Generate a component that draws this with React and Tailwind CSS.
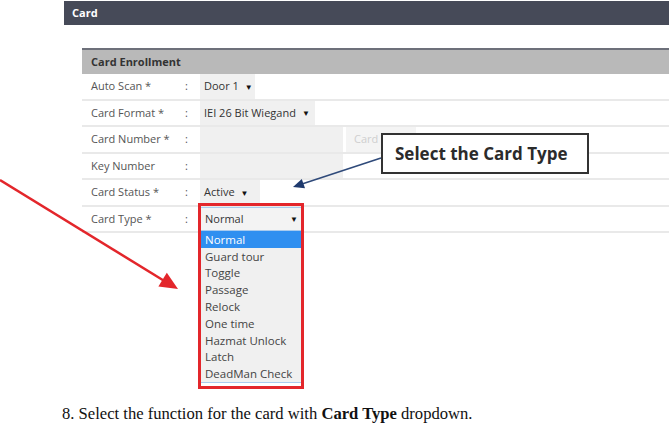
import React from "react";

const rows = [
  { label: "Auto Scan *", h: "h-[27px]", value: { text: "Door 1", w: "w-[55px]" } },
  { label: "Card Format *", h: "h-[26px]", value: { text: "IEI 26 Bit Wiegand", w: "w-[115px]" } },
  { label: "Card Number *", h: "h-[27px]", kind: "number" },
  { label: "Key Number", h: "h-[26px]", kind: "key" },
  { label: "Card Status *", h: "h-[27px]", value: { text: "Active", w: "w-[60px]" } },
  { label: "Card Type *", h: "h-[26px]", kind: "type" },
];

const cardTypes = [
  "Normal",
  "Guard tour",
  "Toggle",
  "Passage",
  "Relock",
  "One time",
  "Hazmat Unlock",
  "Latch",
  "DeadMan Check",
];

const Caret = () => <span className="shrink-0 text-[8px] leading-none text-[#111]">▼</span>;

const SelectBox = ({ text, w }) => (
  <div className={`flex h-full items-center gap-[6px] whitespace-nowrap bg-[#f0f0f0] pl-[4px] ${w}`}>
    <span>{text}</span>
    <Caret />
  </div>
);

const ValueCell = ({ row }) => {
  if (row.value) return <SelectBox {...row.value} />;
  if (row.kind === "number") {
    return (
      <div className="flex h-full gap-[3px]">
        <div className="h-full w-[143px] bg-[#f0f0f0]" />
        <div className="flex h-full w-[70px] items-center bg-[#f4f4f4] pl-[8px] text-[#cfcfcf]">Card</div>
      </div>
    );
  }
  if (row.kind === "key") return <div className="h-full w-[143px] bg-[#f0f0f0]" />;
  return (
    <div className="flex h-full w-[102px] items-center justify-between border border-[#a9cbee] bg-[#f3f3f3] pl-[4px] pr-[3px]">
      <span>Normal</span>
      <Caret />
    </div>
  );
};

export default function App() {
  return (
    <div className="relative h-[435px] w-[669px] overflow-hidden bg-white font-['Open_Sans',sans-serif]">
      {/* page title bar */}
      <div className="ml-[64px] mt-px flex h-6 items-center bg-[#464a58] pl-2 text-[11px] font-bold text-white">
        Card
      </div>

      {/* enrollment form */}
      <div className="ml-[82px] mt-[23px] text-[11px]">
        <div className="flex h-[26px] items-center border-t-2 border-[#6d707a] bg-[#b9b9b9] pl-[9px] font-bold text-[#333]">
          Card Enrollment
        </div>
        {rows.map((row) => (
          <div key={row.label} className={`flex ${row.h} border-b-2 border-[#e9e9e9]`}>
            <div className="flex w-[103px] items-center pl-[9px] text-[#555]">{row.label}</div>
            <div className="flex w-[15px] items-center text-[#555]">:</div>
            <div className="h-full text-[#333]">
              <ValueCell row={row} />
            </div>
          </div>
        ))}
      </div>

      <p className="ml-[62px] mt-[170px] font-['Liberation_Serif',serif] text-[16.6px] leading-[22px] text-[#111]">
        8. Select the function for the card with <b>Card Type</b> dropdown.
      </p>

      {/* open card type list */}
      <div className="absolute left-[200px] top-[231px] w-[102px] border border-t-0 border-[#a9cbee] bg-[#f0f0f0] text-[11.5px] text-[#444]">
        {cardTypes.map((t, i) => (
          <div
            key={t}
            className={`flex h-[16.8px] items-center pl-[4px] ${i === 0 ? "bg-[#2f8ff0] text-white" : ""}`}
          >
            {t}
          </div>
        ))}
      </div>

      {/* highlight frame */}
      <div className="absolute left-[198px] top-[203px] h-[186px] w-[106px] border-[3px] border-[#e3262b]" />

      {/* callout */}
      <div className="absolute left-[381px] top-[133px] flex h-[41px] w-[208px] items-center border-2 border-[#333] bg-white pl-[12px] text-[17px] font-bold text-[#2b2b2b]">
        Select the Card Type
      </div>

      <svg className="absolute left-0 top-0" width="669" height="435">
        <line x1="381" y1="158" x2="302" y2="184" stroke="#2f4a7a" strokeWidth="1.6" />
        <polygon points="293,187 305,188.3 301.8,178.9" fill="#1f3a6e" />
        <line x1="0" y1="180" x2="166" y2="282" stroke="#e3262b" strokeWidth="2.5" />
        <polygon points="178,289 158.4,286.4 166.8,272.8" fill="#e3262b" />
      </svg>
    </div>
  );
}
